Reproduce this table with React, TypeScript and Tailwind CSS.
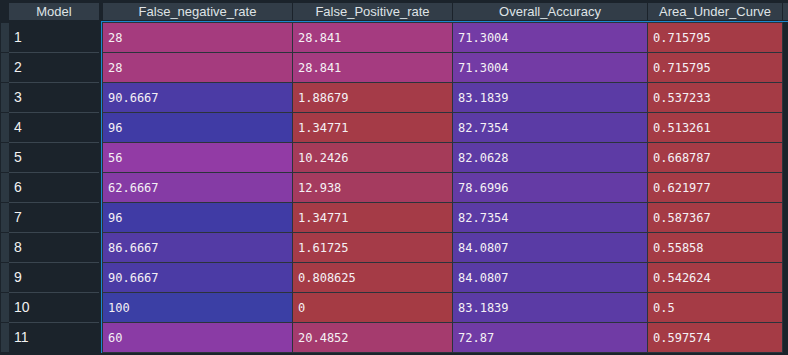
const cols = [
  { label: "False_negative_rate", w: "w-[189px]" },
  { label: "False_Positive_rate", w: "w-[159px]" },
  { label: "Overall_Accuracy", w: "w-[194px]" },
  { label: "Area_Under_Curve", w: "w-[134px]" },
];

const rows: string[][] = [
  ["1", "28", "28.841", "71.3004", "0.715795"],
  ["2", "28", "28.841", "71.3004", "0.715795"],
  ["3", "90.6667", "1.88679", "83.1839", "0.537233"],
  ["4", "96", "1.34771", "82.7354", "0.513261"],
  ["5", "56", "10.2426", "82.0628", "0.668787"],
  ["6", "62.6667", "12.938", "78.6996", "0.621977"],
  ["7", "96", "1.34771", "82.7354", "0.587367"],
  ["8", "86.6667", "1.61725", "84.0807", "0.55858"],
  ["9", "90.6667", "0.808625", "84.0807", "0.542624"],
  ["10", "100", "0", "83.1839", "0.5"],
  ["11", "60", "20.4852", "72.87", "0.597574"],
];

// red (0) -> magenta -> purple -> blue (100)
const heat = (v: number) => `hsl(${355 - Math.min(Math.max(v, 0), 100) * 1.17} 47% 44%)`;

const App = () => {
  return (
    <div className="w-[788px] h-[355px] overflow-hidden bg-[#1b232b] pt-[3px] font-['Liberation_Sans',Arial,sans-serif]">
      {/* header */}
      <div className="flex h-[17px] text-[13px] leading-[17px] text-[#dfe3e6]">
        <div className="w-[9px]" />
        <div className="w-[90px] bg-[#323d48] text-center">Model</div>
        <div className="flex flex-1 gap-px pl-[4px]">
          {cols.map((c) => (
            <div key={c.label} className={`${c.w} bg-[#323d48] text-center`}>
              {c.label}
            </div>
          ))}
          <div className="flex-1 bg-[#323d48]" />
        </div>
      </div>

      {/* body */}
      <div className="mt-px flex">
        <div className="w-[101px] pt-px">
          {rows.map((r, i) => (
            <div key={r[0]} className="flex h-[30px] flex-col">
              <div className={`ml-[9px] h-px w-[90px] ${i > 0 ? "bg-[#3a454f]" : ""}`} />
              <div className="flex h-[29px]">
                <div className="ml-px w-[8px] bg-[#2c3842]" />
                <div className="flex w-[90px] items-center pl-[5px] text-[14px] text-[#f2f2f2]">
                  {r[0]}
                </div>
              </div>
            </div>
          ))}
        </div>

        <div className="flex-1 border-l border-t border-[#1a87cf]">
          <div className="flex w-fit flex-col gap-px bg-[#2b333b] p-px font-['DejaVu_Sans_Mono',monospace] text-[12px] text-[#f5f1f5]">
            {rows.map((r) => (
              <div key={r[0]} className="flex h-[29px] gap-px">
                {r.slice(1).map((v, j) => (
                  <div
                    key={j}
                    className={`${cols[j].w} flex items-center pl-[5px]`}
                    style={{ backgroundColor: heat(parseFloat(v)) }}
                  >
                    {v}
                  </div>
                ))}
              </div>
            ))}
          </div>
        </div>
      </div>
    </div>
  );
};

export default App;
